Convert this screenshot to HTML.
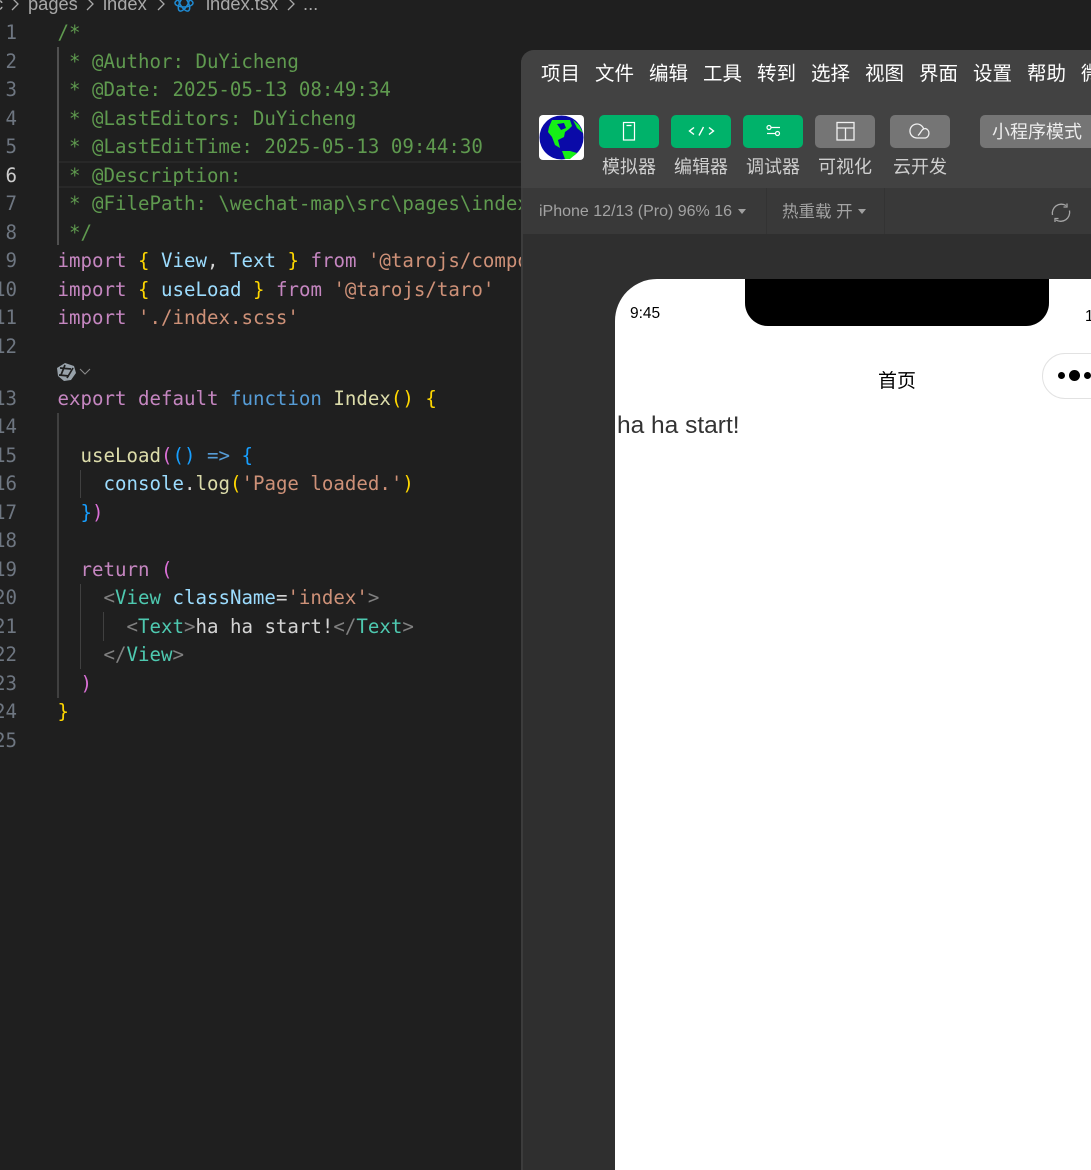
<!DOCTYPE html>
<html lang="zh">
<head>
<meta charset="utf-8">
<title>index.tsx</title>
<style>
html,body{margin:0;padding:0;background:#1f1f1f}
body{position:relative;width:1091px;height:1170px;overflow:hidden;font-family:"Liberation Sans","Noto Sans CJK SC",sans-serif}
.abs{position:absolute}
pre{margin:0;font-family:"DejaVu Sans Mono","Liberation Mono",monospace;font-size:19.1px;line-height:28.5px;color:#d4d4d4}
#code{position:absolute;left:57.5px;top:19.4px;white-space:pre}
#nums{position:absolute;left:-10px;width:27px;top:19.4px;text-align:right;color:#6e7681}
#nums b{color:#cccccc;font-weight:400}
.lens{height:23.5px;display:block}
.c{color:#5f9a4f}.k{color:#c586c0}.y{color:#ffd700}.v{color:#9cdcfe}.s{color:#ce9178}.f{color:#569cd6}.n{color:#dcdcaa}.p{color:#da70d6}.b{color:#179fff}.t{color:#4ec9b0}.g{color:#808080}
.guide{position:absolute;width:1px;background:#404040}
.crumb{position:absolute;top:-7px;font-size:18.3px;line-height:22px;color:#a9a9a9;white-space:nowrap}
#panel{position:absolute;left:521px;top:50px;width:570px;height:1120px;background:#2f2f2f;border-radius:13px 0 0 0;overflow:hidden}
#panel .edge{position:absolute;left:0;top:0;bottom:0;width:2px;background:#3c3c3c}
#head{position:absolute;left:0;top:0;width:570px;height:138px;background:#424242}
#bar{position:absolute;left:2px;top:138px;width:568px;height:46px;background:#393939}
.menu{position:absolute;top:12px;font-size:19.5px;line-height:25px;color:#fff;white-space:nowrap}
.btn{position:absolute;top:65px;width:60px;height:33px;border-radius:5px;background:#00b26a}
.btn.gr{background:#757575}
.btn svg{position:absolute;left:0;top:0}
.lbl{position:absolute;top:94px;width:80px;text-align:center;font-size:18px;line-height:46px;color:#cfcfcf;white-space:nowrap}
.bt{position:absolute;top:150px;font-size:16px;line-height:24px;color:#a3a3a3;white-space:nowrap}
.tri{position:absolute;width:0;height:0;border-left:4.5px solid transparent;border-right:4.5px solid transparent;border-top:5px solid #a0a0a0}
#phone{position:absolute;left:94px;top:229px;width:500px;height:900px;background:#fff;border-radius:42px 0 0 0;overflow:hidden}
#phone div{position:absolute;white-space:nowrap}
</style>
</head>
<body>
<div class="crumb" style="left:-6px">c</div>
<svg class="abs" style="left:0;top:0" width="320" height="14" fill="none" stroke="#a9a9a9" stroke-width="1.3">
<path d="M12 -2L18 4L12 10M87 -2L93 4L87 10M158 -2L164 4L158 10M288 -2L294 4L288 10"/>
<g stroke="#1f8ad2" stroke-width="1.5"><ellipse cx="184" cy="3" rx="9" ry="4"/><ellipse cx="184" cy="3" rx="9" ry="4" transform="rotate(60 184 3)"/><ellipse cx="184" cy="3" rx="9" ry="4" transform="rotate(120 184 3)"/></g>
</svg>
<div class="crumb" style="left:28px">pages</div>
<div class="crumb" style="left:103px">index</div>
<div class="crumb" style="left:206px">index.tsx</div>
<div class="crumb" style="left:303px">...</div>

<div class="abs" style="left:58px;top:161px;width:470px;height:27px;border-top:2px solid #282828;border-bottom:2px solid #282828;box-sizing:border-box"></div>
<div class="guide" style="left:57px;top:47px;height:198px;width:2px;background:#505050"></div>
<div class="guide" style="left:57px;top:413px;height:285px;width:2px"></div>
<div class="guide" style="left:80px;top:470px;height:28px"></div>
<div class="guide" style="left:80px;top:584px;height:85px"></div>
<div class="guide" style="left:103px;top:612px;height:29px"></div>

<pre id="nums">1
2
3
4
5
<b>6</b>
7
8
9
10
11
12
<span class="lens"></span>13
14
15
16
17
18
19
20
21
22
23
24
25</pre>

<pre id="code"><span class="c">/*
 * @Author: DuYicheng
 * @Date: 2025-05-13 08:49:34
 * @LastEditors: DuYicheng
 * @LastEditTime: 2025-05-13 09:44:30
 * @Description:
 * @FilePath: \wechat-map\src\pages\index\index.tsx
 */</span>
<span class="k">import</span> <span class="y">{</span> <span class="v">View</span>, <span class="v">Text</span> <span class="y">}</span> <span class="k">from</span> <span class="s">'@tarojs/components'</span>
<span class="k">import</span> <span class="y">{</span> <span class="v">useLoad</span> <span class="y">}</span> <span class="k">from</span> <span class="s">'@tarojs/taro'</span>
<span class="k">import</span> <span class="s">'./index.scss'</span>

<span class="lens"></span><span class="k">export</span> <span class="k">default</span> <span class="f">function</span> <span class="n">Index</span><span class="y">()</span> <span class="y">{</span>

  <span class="n">useLoad</span><span class="p">(</span><span class="b">()</span> <span class="f">=&gt;</span> <span class="b">{</span>
    <span class="v">console</span>.<span class="n">log</span><span class="y">(</span><span class="s">'Page loaded.'</span><span class="y">)</span>
  <span class="b">}</span><span class="p">)</span>

  <span class="k">return</span> <span class="p">(</span>
    <span class="g">&lt;</span><span class="t">View</span> <span class="v">className</span>=<span class="s">'index'</span><span class="g">&gt;</span>
      <span class="g">&lt;</span><span class="t">Text</span><span class="g">&gt;</span>ha ha start!<span class="g">&lt;/</span><span class="t">Text</span><span class="g">&gt;</span>
    <span class="g">&lt;/</span><span class="t">View</span><span class="g">&gt;</span>
  <span class="p">)</span>
<span class="y">}</span></pre>

<svg class="abs" style="left:56px;top:362px" width="36" height="20" fill="none">
<path d="M1 6L9 1L18 4L20 11L15 18L8 19L2 14Z" fill="#98a2aa"/>
<path d="M4 6L15 7M9 3L5 13M17 6L11 16M3 13L13 14" stroke="#1f1f1f" stroke-width="1.7"/>
<path d="M24 7L29 12L34 7" stroke="#8a8a8a" stroke-width="1.1"/>
</svg>

<div id="panel">
  <div class="edge"></div>
  <div id="head"></div>
  <div class="menu" style="left:20px">项目</div>
  <div class="menu" style="left:74px">文件</div>
  <div class="menu" style="left:128px">编辑</div>
  <div class="menu" style="left:182px">工具</div>
  <div class="menu" style="left:236px">转到</div>
  <div class="menu" style="left:290px">选择</div>
  <div class="menu" style="left:344px">视图</div>
  <div class="menu" style="left:398px">界面</div>
  <div class="menu" style="left:452px">设置</div>
  <div class="menu" style="left:506px">帮助</div>
  <div class="menu" style="left:560px">微信开发者工具</div>

  <svg class="abs" style="left:18px;top:65px" width="45" height="45">
    <rect width="45" height="45" rx="4" fill="#fff"/>
    <circle cx="22.500" cy="22.500" r="22" fill="#0a0aa8"/>
    <path d="M10 12L13 5L31 5L33 11L30 14L26 17L25 22L19 25L21 33L16 30L13 22L9 17Z" fill="#16f016"/>
    <path d="M23 36L31 36L38 38L31 44L26 44Z" fill="#16f016"/>
    <path d="M34 5L40 10L44 18L38 13Z" fill="#16f016"/>
    <path d="M18 9L25 8L27 13L22 15Z" fill="#0a0aa8"/>
  </svg>

  <div class="btn" style="left:78px"><svg width="60" height="33" fill="none" stroke="#fff" stroke-width="1.2"><rect x="24.500" y="7.500" width="11" height="17.500"/><path d="M27.500 10.500h5"/></svg></div>
  <div class="btn" style="left:150px"><svg width="60" height="33" fill="none" stroke="#fff" stroke-width="1.4"><path d="M23 12.500L18.500 16L23 19.500M38 12.500L42.500 16L38 19.500M32.500 12L28 20.500"/></svg></div>
  <div class="btn" style="left:222px"><svg width="60" height="33" fill="none" stroke="#fff" stroke-width="1.2"><circle cx="26" cy="12.500" r="2"/><path d="M28 12.500H37"/><circle cx="34.500" cy="18.500" r="2"/><path d="M24 18.500H32.500"/></svg></div>
  <div class="btn gr" style="left:294px"><svg width="60" height="33" fill="none" stroke="#f0f0f0" stroke-width="1.3"><rect x="22" y="7.500" width="17" height="17.500"/><path d="M22 13H39M30.500 13V25"/></svg></div>
  <div class="btn gr" style="left:369px"><svg width="60" height="33" fill="none" stroke="#f0f0f0" stroke-width="1.3"><path d="M33.500 13.500A7 7 0 1 0 27 23H35.500A5 5 0 0 0 35.500 13.500C31.500 13.500 31 18 28 20.500"/></svg></div>
  <div class="btn gr" style="left:459px;width:130px;color:#ececec;font-size:18px;line-height:35px;padding-left:12px;box-sizing:border-box;white-space:nowrap">小程序模式</div>

  <div class="lbl" style="left:68px">模拟器</div>
  <div class="lbl" style="left:140px">编辑器</div>
  <div class="lbl" style="left:212px">调试器</div>
  <div class="lbl" style="left:284px">可视化</div>
  <div class="lbl" style="left:359px">云开发</div>

  <div id="bar"></div>
  <div class="abs" style="left:245px;top:138px;width:1px;height:46px;background:#333"></div>
  <div class="abs" style="left:363px;top:138px;width:1px;height:46px;background:#333"></div>
  <div class="bt" style="left:18px">iPhone 12/13 (Pro) 96% 16</div>
  <div class="tri" style="left:217px;top:159px"></div>
  <div class="bt" style="left:261px;font-size:16.500px">热重载 开</div>
  <div class="tri" style="left:337px;top:159px"></div>
  <svg class="abs" style="left:529px;top:152px" width="22" height="22" fill="none" stroke="#a5a5a5" stroke-width="1.300">
    <path d="M2.500 13A9 9 0 0 1 16 3.500M19.500 8.500A9 9 0 0 1 6 18"/>
    <path d="M13.500 5L17 5L17 1.500M8.500 16.500L5 16.500L5 20"/>
  </svg>

  <div id="phone">
    <div style="left:130px;top:0;width:304px;height:47px;background:#000;border-radius:0 0 23px 23px"></div>
    <div style="left:15px;top:25px;font-size:15.500px;line-height:20px;color:#000">9:45</div>
    <div style="left:470px;top:28px;font-size:15.500px;line-height:20px;color:#000">100%</div>
    <div style="left:263px;top:90px;font-size:19px;line-height:26px;color:#000">首页</div>
    <div style="left:427px;top:74px;width:120px;height:46px;box-sizing:border-box;border:1.500px solid #e2e2e2;border-radius:23px"></div>
    <div style="left:443px;top:92.500px;width:7px;height:7px;border-radius:50%;background:#000"></div>
    <div style="left:454px;top:91px;width:11px;height:11px;border-radius:50%;background:#000"></div>
    <div style="left:469px;top:92.500px;width:7px;height:7px;border-radius:50%;background:#000"></div>
    <div style="left:2px;top:131px;font-size:24.500px;line-height:32px;color:#333">ha ha start!</div>
  </div>
</div>
</body>
</html>
